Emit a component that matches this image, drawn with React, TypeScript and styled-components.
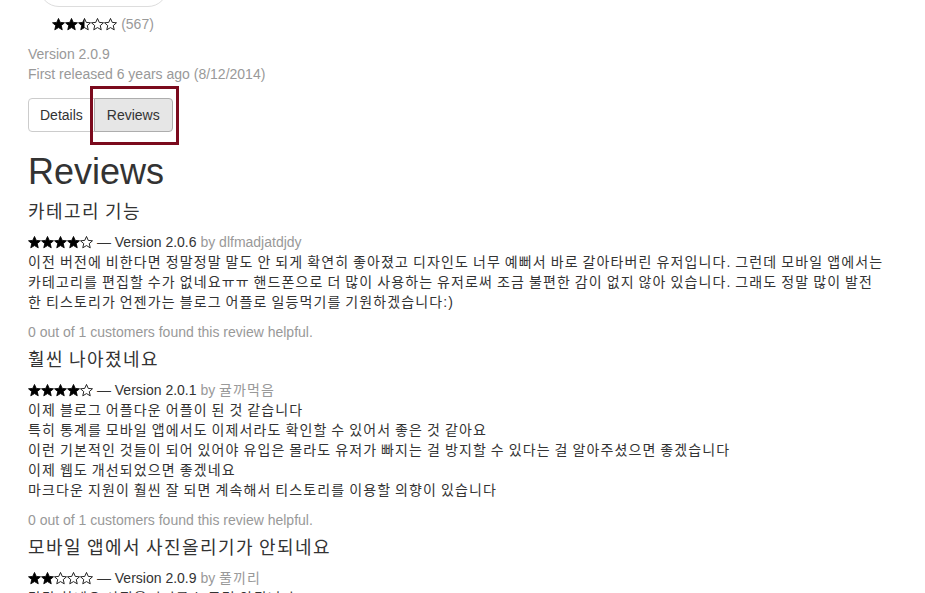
import React from "react";
import styled, { createGlobalStyle } from "styled-components";

const GlobalStyle = createGlobalStyle`
  html, body {
    margin: 0;
    padding: 0;
    overflow: hidden;
    background: #ffffff;
  }
  body {
    font-family: "Liberation Sans", "Noto Sans CJK KR", Arial, sans-serif;
    font-size: 14px;
    line-height: 20px;
    color: #333333;
  }
`;

const Page = styled.div`
  padding: 0 40px 0 28px;
`;

const Summary = styled.div`
  width: 150px;
  display: flex;
  flex-direction: column;
  align-items: center;
`;

const IconFrame = styled.div`
  width: 127px;
  height: 130px;
  margin-top: -125px;
  border: 1px solid #dddddd;
  border-radius: 20px;
  background: #ffffff;
`;

const RatingLine = styled.div`
  margin-top: 7px;
  display: flex;
  align-items: center;
  color: #999999;
  white-space: nowrap;
`;

const Count = styled.span`
  margin-left: 4px;
`;

const StarRow = styled.span`
  display: inline-flex;
  align-items: center;
  vertical-align: -2px;
`;

const Meta = styled.div`
  margin-top: 10px;
  color: #999999;
`;

const BtnGroup = styled.div`
  margin-top: 14px;
  display: flex;
`;

const TabButton = styled.button<{ $active?: boolean; $first?: boolean }>`
  position: relative;
  font-family: inherit;
  font-size: 14px;
  line-height: 20px;
  padding: 6px ${(p) => (p.$first ? "11px" : "12px")};
  color: #333333;
  cursor: pointer;
  background: ${(p) => (p.$active ? "#e6e6e6" : "#ffffff")};
  border: 1px solid ${(p) => (p.$active ? "#adadad" : "#cccccc")};
  border-radius: ${(p) => (p.$first ? "4px 0 0 4px" : "0 4px 4px 0")};
  margin-left: ${(p) => (p.$first ? "0" : "-1px")};
  z-index: ${(p) => (p.$active ? 1 : 0)};
`;

const FocusFrame = styled.span`
  position: absolute;
  left: -5px;
  top: -13px;
  right: -7px;
  bottom: -14px;
  border: 3px solid #7b0a1d;
  pointer-events: none;
`;

const Title = styled.h1`
  font-size: 36px;
  font-weight: 500;
  line-height: 1.1;
  margin: 20px 0 10px;
  color: #333333;
`;

const ReviewTitle = styled.h4`
  font-size: 18px;
  font-weight: 400;
  line-height: 20px;
  margin: 0 0 10px;
  color: #333333;
`;

const Ko = styled.span`
  letter-spacing: 0.08em;
  word-spacing: -0.08em;
`;

const ReviewBody = styled.p`
  margin: 0;
`;

const Author = styled.span`
  color: #999999;
`;

const Helpful = styled.p`
  margin: 10px 0 8px;
  color: #999999;
`;

const STAR =
  "M12 1.6l3.05 6.9 7.45.7-5.65 4.95 1.7 7.35L12 17.6l-6.55 3.9 1.7-7.35L1.5 9.2l7.45-.7z";

const Star: React.FC<{ fill: "full" | "half" | "empty"; id: string }> = ({ fill, id }) => (
  <svg width="13" height="13" viewBox="0.6 0.8 22.8 22.8" aria-hidden="true">
    {fill === "half" && (
      <defs>
        <clipPath id={id}>
          <rect x="0" y="0" width="12" height="24" />
        </clipPath>
      </defs>
    )}
    {fill !== "empty" && (
      <path d={STAR} fill="#000" clipPath={fill === "half" ? `url(#${id})` : undefined} />
    )}
    <path d={STAR} fill="none" stroke="#000" strokeWidth="1.5" strokeLinejoin="miter" />
  </svg>
);

const Stars: React.FC<{ value: number; name: string }> = ({ value, name }) => (
  <StarRow>
    {[0, 1, 2, 3, 4].map((i) => {
      const f = value >= i + 1 ? "full" : value >= i + 0.5 ? "half" : "empty";
      return <Star key={i} fill={f} id={`${name}-${i}`} />;
    })}
  </StarRow>
);

type Review = {
  title: string;
  rating: number;
  version: string;
  author: string;
  lines: string[];
  helpful: string;
};

const reviews: Review[] = [
  {
    title: "카테고리 기능",
    rating: 4,
    version: "2.0.6",
    author: "dlfmadjatdjdy",
    lines: [
      "이전 버전에 비한다면 정말정말 말도 안 되게 확연히 좋아졌고 디자인도 너무 예뻐서 바로 갈아타버린 유저입니다. 그런데 모바일 앱에서는 카테고리를 편집할 수가 없네요ㅠㅠ 핸드폰으로 더 많이 사용하는 유저로써 조금 불편한 감이 없지 않아 있습니다. 그래도 정말 많이 발전한 티스토리가 언젠가는 블로그 어플로 일등먹기를 기원하겠습니다:)",
    ],
    helpful: "0 out of 1 customers found this review helpful.",
  },
  {
    title: "훨씬 나아졌네요",
    rating: 4,
    version: "2.0.1",
    author: "귤까먹음",
    lines: [
      "이제 블로그 어플다운 어플이 된 것 같습니다",
      "특히 통계를 모바일 앱에서도 이제서라도 확인할 수 있어서 좋은 것 같아요",
      "이런 기본적인 것들이 되어 있어야 유입은 몰라도 유저가 빠지는 걸 방지할 수 있다는 걸 알아주셨으면 좋겠습니다",
      "이제 웹도 개선되었으면 좋겠네요",
      "마크다운 지원이 훨씬 잘 되면 계속해서 티스토리를 이용할 의향이 있습니다",
    ],
    helpful: "0 out of 1 customers found this review helpful.",
  },
  {
    title: "모바일 앱에서 사진올리기가 안되네요",
    rating: 2,
    version: "2.0.9",
    author: "풀끼리",
    lines: ["답답 하네요 사진올리기를 누르면 안됩니다", "앱을 다시 설치해도 마찬가지입니다"],
    helpful: "0 out of 1 customers found this review helpful.",
  },
];

const isKo = (s: string) => /[\u3131-\uD79D]/.test(s);

export default function App() {
  return (
    <>
      <GlobalStyle />
      <Page>
        <Summary>
          <IconFrame />
          <RatingLine>
            <Stars value={2.5} name="sum" />
            <Count>(567)</Count>
          </RatingLine>
        </Summary>
        <Meta>
          Version 2.0.9
          <br />
          First released 6 years ago (8/12/2014)
        </Meta>
        <BtnGroup>
          <TabButton $first>Details</TabButton>
          <TabButton $active>
            Reviews
            <FocusFrame />
          </TabButton>
        </BtnGroup>
        <Title>Reviews</Title>
        {reviews.map((r, idx) => (
          <section key={idx}>
            <ReviewTitle>
              <Ko>{r.title}</Ko>
            </ReviewTitle>
            <ReviewBody>
              <Stars value={r.rating} name={`r${idx}`} /> — Version {r.version}{" "}
              <Author>
                by {isKo(r.author) ? <Ko>{r.author}</Ko> : r.author}
              </Author>
              {r.lines.map((l, i) => (
                <React.Fragment key={i}>
                  <br />
                  <Ko>{l}</Ko>
                </React.Fragment>
              ))}
            </ReviewBody>
            <Helpful>{r.helpful}</Helpful>
          </section>
        ))}
      </Page>
    </>
  );
}
